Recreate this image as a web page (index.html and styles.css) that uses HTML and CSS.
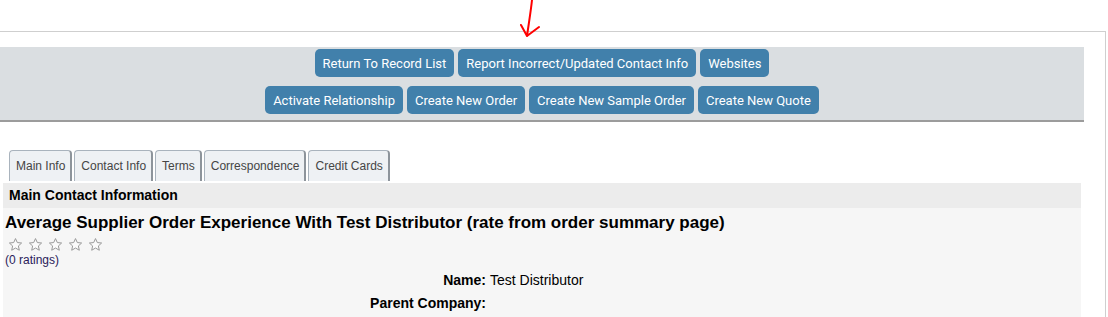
FILE: index.html
```html
<!DOCTYPE html>
<html lang="en">
<head>
  <meta charset="UTF-8" />
  <title>Supplier Record</title>
  <link rel="stylesheet" href="styles.css">
</head>
<body>

  <!-- hand-drawn annotation -->
  <svg class="mark" width="30" height="40" viewBox="0 0 30 40">
    <path d="M15 0 C14 10 12 22 10 36 M4 25 L10 36 L22 27" fill="none" stroke="#ff0000" stroke-width="2" stroke-linecap="round" stroke-linejoin="round"/>
  </svg>

  <div class="frame">
    <div class="toolbar">
      <div class="btn-row">
        <button class="btn">Return To Record List</button>
        <button class="btn">Report Incorrect/Updated Contact Info</button>
        <button class="btn">Websites</button>
      </div>
      <div class="btn-row">
        <button class="btn">Activate Relationship</button>
        <button class="btn">Create New Order</button>
        <button class="btn">Create New Sample Order</button>
        <button class="btn">Create New Quote</button>
      </div>
    </div>

    <ul class="tabs">
      <li class="tab">Main Info</li>
      <li class="tab">Contact Info</li>
      <li class="tab">Terms</li>
      <li class="tab">Correspondence</li>
      <li class="tab">Credit Cards</li>
    </ul>

    <div class="panel">
      <div class="panel-head">Main Contact Information</div>
      <div class="panel-body">
        <h2 class="rating-title">Average Supplier Order Experience With Test Distributor (rate from order summary page)</h2>
        <div class="stars" id="stars"></div>
        <div class="rating-count">(0 ratings)</div>

        <div class="fields">
          <div class="field">
            <div class="label">Name:</div>
            <div class="value">Test Distributor</div>
          </div>
          <div class="field">
            <div class="label">Parent Company:</div>
            <div class="value"></div>
          </div>
        </div>
      </div>
    </div>
  </div>

  <script>
    const star = '<svg class="star" width="15" height="15" viewBox="0 0 24 24"><path d="M12 2.5l2.9 6.4 6.9.7-5.2 4.7 1.5 6.9L12 17.6l-6.1 3.6 1.5-6.9-5.2-4.7 6.9-.7z" fill="#fbfbfb" stroke="#9a9a9a" stroke-width="1.6" stroke-linejoin="round"/></svg>';
    document.getElementById("stars").innerHTML = star.repeat(5);
  </script>

</body>
</html>
```

FILE: styles.css
```css
body {
  margin: 0;
  background: #ffffff;
  font-family: Arial, "Liberation Sans", sans-serif;
  color: #000;
}

.mark {
  position: absolute;
  left: 517px;
  top: 0;
}

.frame {
  margin-top: 31px;
  width: 1105px;
  border-top: 1px solid #cfcfcf;
  border-right: 1px solid #cfcfcf;
  padding-top: 15px;
  min-height: 280px;
}

.toolbar {
  width: 1084px;
  background: #dadee1;
  border-bottom: 2px solid #9c9c9c;
  padding: 2px 0 6px;
  display: flex;
  flex-direction: column;
  gap: 9px;
}

.btn-row {
  display: flex;
  justify-content: center;
  gap: 4px;
}

.btn {
  height: 28px;
  padding: 0 8px;
  border: none;
  border-radius: 5px;
  background: #4180ab;
  color: #fff;
  font-family: Roboto, sans-serif;
  font-size: 13px;
}

.tabs {
  list-style: none;
  margin: 28px 0 0;
  padding: 0 0 0 9px;
  display: flex;
  gap: 2px;
}

.tab {
  height: 30px;
  line-height: 31px;
  padding: 0 5px 0 6px;
  background: #eef1f4;
  border: 1px solid #a9b3bd;
  border-right: 2px solid #8d949b;
  border-bottom: none;
  border-radius: 4px 4px 0 0;
  font-size: 12px;
  color: #454545;
}

.panel {
  margin: 2px 0 0 3px;
  width: 1078px;
}

.panel-head {
  background: #ececec;
  height: 25px;
  line-height: 25px;
  padding-left: 6px;
  font-size: 14px;
  font-weight: bold;
}

.panel-body {
  background: #f6f6f6;
  padding: 5px 0 10px 2px;
}

.rating-title {
  margin: 0;
  font-size: 17px;
  line-height: 20px;
}

.stars {
  display: flex;
  gap: 5px;
  padding: 4px 0 0 3px;
  height: 16px;
}

.rating-count {
  font-size: 12px;
  color: #2a1b5a;
  line-height: 14px;
}

.fields {
  margin-top: 2px;
}

.field {
  display: flex;
  gap: 4px;
  font-size: 14px;
  line-height: 23px;
}

.label {
  width: 481px;
  text-align: right;
  font-weight: bold;
}
```
